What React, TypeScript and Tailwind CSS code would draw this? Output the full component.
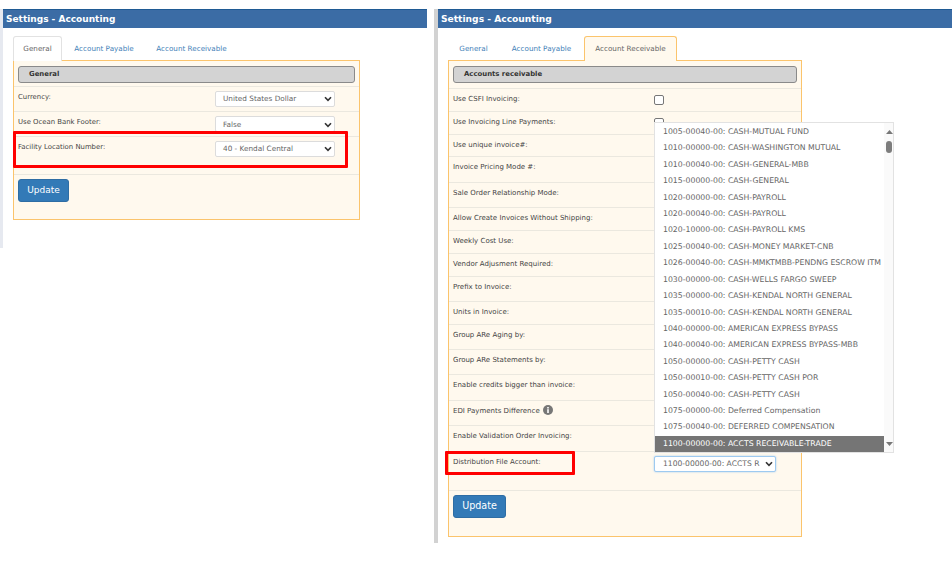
import React from "react";

const font = "font-['DejaVu_Sans',sans-serif]";

function Chevron() {
  return (
    <svg width="8" height="6" viewBox="0 0 8 6" className="shrink-0">
      <path d="M1 1.2 L4 4.4 L7 1.2" fill="none" stroke="#333" strokeWidth="1.6" />
    </svg>
  );
}

function Select({ value, className = "" }: { value: string; className?: string }) {
  return (
    <div className={`flex items-center justify-between bg-white rounded-[2px] border border-[#dcdcdc] pl-[7px] pr-[2px] h-[16px] text-[#666] ${className}`}>
      <span className="whitespace-nowrap">{value}</span>
      <Chevron />
    </div>
  );
}

function Row({ label, h, children }: { label: React.ReactNode; h: number; children?: React.ReactNode }) {
  return (
    <div className="flex border-t border-[#ebe8df] pl-[4px]" style={{ height: h }}>
      <div className="w-[201px] pt-[4px] text-[7px] leading-[12px] text-[#444] whitespace-nowrap">{label}</div>
      <div className="pt-[6px]">{children}</div>
    </div>
  );
}

function Check() {
  return <div className="w-[10px] h-[10px] rounded-[2px] border border-[#777] bg-white" />;
}

function Tab({ label, w, state }: { label: string; w: number; state?: "white" | "orange" }) {
  const cls =
    state === "white"
      ? "border border-b-0 border-[#e2e2e2] bg-white text-[#666] h-[25px] relative z-10"
      : state === "orange"
        ? "border border-b-0 border-[#fbc46c] bg-[#fff9ee] text-[#666] h-[25px] relative z-10"
        : "text-[#3f7fb8] h-[24px]";
  return (
    <div className={`flex items-center justify-center rounded-t-[3px] text-[7.2px] whitespace-nowrap ${cls}`} style={{ width: w }}>
      {label}
    </div>
  );
}

function SectionHead({ title }: { title: string }) {
  return (
    <div className="flex items-center h-[17px] rounded-[3px] border border-[#8a8a8a] bg-[#d3d3d3] pl-[10px] text-[6.9px] font-bold text-[#333]">
      {title}
    </div>
  );
}

function UpdateBtn({ w, h, className }: { w: number; h: number; className: string }) {
  return (
    <div className={`flex items-center justify-center rounded-[3px] border border-[#2e6da4] bg-[#337ab7] text-white ${className}`} style={{ width: w, height: h }}>
      Update
    </div>
  );
}

function Header({ className }: { className: string }) {
  return (
    <div className={`flex items-center h-[19px] bg-[#3b6ca5] border-t border-[#1f5a94] pl-[3px] pt-[1px] text-white font-bold ${className}`}>
      Settings - Accounting
    </div>
  );
}

const accounts = [
  "1005-00040-00: CASH-MUTUAL FUND",
  "1010-00000-00: CASH-WASHINGTON MUTUAL",
  "1010-00040-00: CASH-GENERAL-MBB",
  "1015-00000-00: CASH-GENERAL",
  "1020-00000-00: CASH-PAYROLL",
  "1020-00040-00: CASH-PAYROLL",
  "1020-10000-00: CASH-PAYROLL KMS",
  "1025-00040-00: CASH-MONEY MARKET-CNB",
  "1026-00040-00: CASH-MMKTMBB-PENDNG ESCROW ITM",
  "1030-00000-00: CASH-WELLS FARGO SWEEP",
  "1035-00000-00: CASH-KENDAL NORTH GENERAL",
  "1035-00010-00: CASH-KENDAL NORTH GENERAL",
  "1040-00000-00: AMERICAN EXPRESS BYPASS",
  "1040-00040-00: AMERICAN EXPRESS BYPASS-MBB",
  "1050-00000-00: CASH-PETTY CASH",
  "1050-00010-00: CASH-PETTY CASH POR",
  "1050-00040-00: CASH-PETTY CASH",
  "1075-00000-00: Deferred Compensation",
  "1075-00040-00: DEFERRED COMPENSATION",
  "1100-00000-00: ACCTS RECEIVABLE-TRADE",
];

function Dropdown() {
  return (
    <div className="absolute left-0 bottom-[calc(100%-1px)] w-[240px] h-[331px] flex bg-white border border-[#e2e2e2] z-20">
      <ul className="w-[229px] flex flex-col pt-[0.5px]">
        {accounts.map((a, i) => {
          const selected = i === accounts.length - 1;
          return (
            <li
              key={a}
              className={`h-[16.5px] flex items-center pl-[8px] text-[7.75px] whitespace-nowrap ${selected ? "bg-[#757575] text-white" : "text-[#666]"}`}
            >
              {a}
            </li>
          );
        })}
      </ul>
      <div className="relative flex-1 bg-[#fafafa]">
        <svg width="7" height="4" viewBox="0 0 7 4" className="absolute left-[2px] top-[7px]">
          <path d="M0 4 L3.5 0 L7 4 Z" fill="#777" />
        </svg>
        <div className="absolute left-[2px] top-[18px] w-[6px] h-[12px] rounded-full bg-[#7d7d7d]" />
        <svg width="7" height="4" viewBox="0 0 7 4" className="absolute left-[2px] bottom-[6px]">
          <path d="M0 0 L3.5 4 L7 0 Z" fill="#777" />
        </svg>
      </div>
    </div>
  );
}

function InfoIcon() {
  return (
    <svg width="10" height="10" viewBox="0 0 10 10" className="inline-block ml-[3px] align-[-2px]">
      <circle cx="5" cy="5" r="5" fill="#777" />
      <rect x="4.2" y="4.2" width="1.6" height="3.8" fill="#fff" />
      <rect x="4.2" y="2" width="1.6" height="1.5" fill="#fff" />
    </svg>
  );
}

const rows: [string, number][] = [
  ["Use CSFI Invoicing:", 23],
  ["Use Invoicing Line Payments:", 23],
  ["Use unique invoice#:", 22],
  ["Invoice Pricing Mode #:", 26],
  ["Sale Order Relationship Mode:", 25],
  ["Allow Create Invoices Without Shipping:", 23],
  ["Weekly Cost Use:", 23],
  ["Vendor Adjusment Required:", 23],
  ["Prefix to Invoice:", 25],
  ["Units in Invoice:", 23],
  ["Group ARe Aging by:", 25],
  ["Group ARe Statements by:", 25],
  ["Enable credits bigger than invoice:", 26],
  ["EDI Payments Difference", 25],
  ["Enable Validation Order Invoicing:", 26],
];

const leftLabel = "w-[197px] pt-[4px] text-[6.9px] leading-[12px] text-[#444]";

export default function App() {
  return (
    <div className={`relative flex w-[952px] h-[569px] bg-white overflow-hidden ${font}`}>
      {/* Left screenshot */}
      <div className="w-[427px] h-[239px] mt-[9px] border-l-[3px] border-[#e6e9f0]">
        <Header className="text-[9px]" />
        <div className="pl-[10px] pt-[8px]">
          <div className="flex items-end gap-[2px]">
            <Tab label="General" w={49} state="white" />
            <Tab label="Account Payable" w={80} />
            <Tab label="Account Receivable" w={91} />
          </div>
          <div className="relative w-[347px] h-[160px] -mt-[1px] border border-[#fbc46c] bg-[#fff9ee] text-[7.3px]">
            <div className="px-[4px] pt-[5px] pb-[3px]">
              <SectionHead title="General" />
            </div>
            <div className="flex border-t border-[#ebe8df] pl-[4px] h-[25px]">
              <div className={leftLabel}>Currency:</div>
              <div className="pt-[4px]"><Select value="United States Dollar" className="w-[120px]" /></div>
            </div>
            <div className="flex border-t border-[#ebe8df] pl-[4px] h-[25px]">
              <div className={leftLabel}>Use Ocean Bank Footer:</div>
              <div className="pt-[4px]"><Select value="False" className="w-[120px] pt-[2px]" /></div>
            </div>
            <div className="flex border-t border-[#ebe8df] pl-[4px] h-[38px]">
              <div className={leftLabel}>Facility Location Number:</div>
              <div className="pt-[4px]"><Select value="40 - Kendal Central" className="w-[120px]" /></div>
            </div>
            <div className="border-t border-[#ebe8df] pl-[4px] pt-[4px]">
              <UpdateBtn w={51} h={23} className="text-[9px]" />
            </div>
            <div className="absolute left-[-1px] top-[70px] w-[335px] h-[37px] border-[3px] border-[#ff0000] rounded-[1px]" />
          </div>
        </div>
      </div>

      {/* Right screenshot */}
      <div className="ml-[7px] w-[518px] h-[534px] mt-[9px] border-l-[4px] border-[#d2d2d2]">
        <Header className="text-[9.15px]" />
        <div className="pl-[10px] pt-[8px]">
          <div className="flex items-end gap-[1px]">
            <Tab label="General" w={51} />
            <Tab label="Account Payable" w={83} />
            <Tab label="Account Receivable" w={93} state="orange" />
          </div>
          <div className="relative w-[354px] h-[477px] -mt-[1px] border border-[#fbc46c] bg-[#fff9ee]">
            <div className="px-[4px] pt-[5px] pb-[5px]">
              <SectionHead title="Accounts receivable" />
            </div>
            {rows.map(([label, h], i) => (
              <Row
                key={label}
                h={h}
                label={label === "EDI Payments Difference" ? <>{label}<InfoIcon /></> : label}
              >
                {i < 2 && <Check />}
              </Row>
            ))}
            <div className="flex border-t border-[#ebe8df] pl-[4px] h-[39px]">
              <div className="w-[201px] pt-[4px] text-[7px] leading-[12px] text-[#444]">Distribution File Account:</div>
              <div className="relative pt-[4px]">
                <Select value="1100-00000-00: ACCTS R" className="w-[122px] pl-[8px] text-[7.6px] !border-[#9ecaf0] shadow-[0_0_2px_#9ecaf0]" />
                <Dropdown />
              </div>
            </div>
            <div className="border-t border-[#ebe8df] pl-[4px] pt-[4px]">
              <UpdateBtn w={53} h={23} className="text-[9.6px]" />
            </div>
            <div className="absolute left-[-4px] top-[390px] w-[130px] h-[24px] border-[3px] border-[#ff0000] rounded-[1px]" />
          </div>
        </div>
      </div>
    </div>
  );
}
